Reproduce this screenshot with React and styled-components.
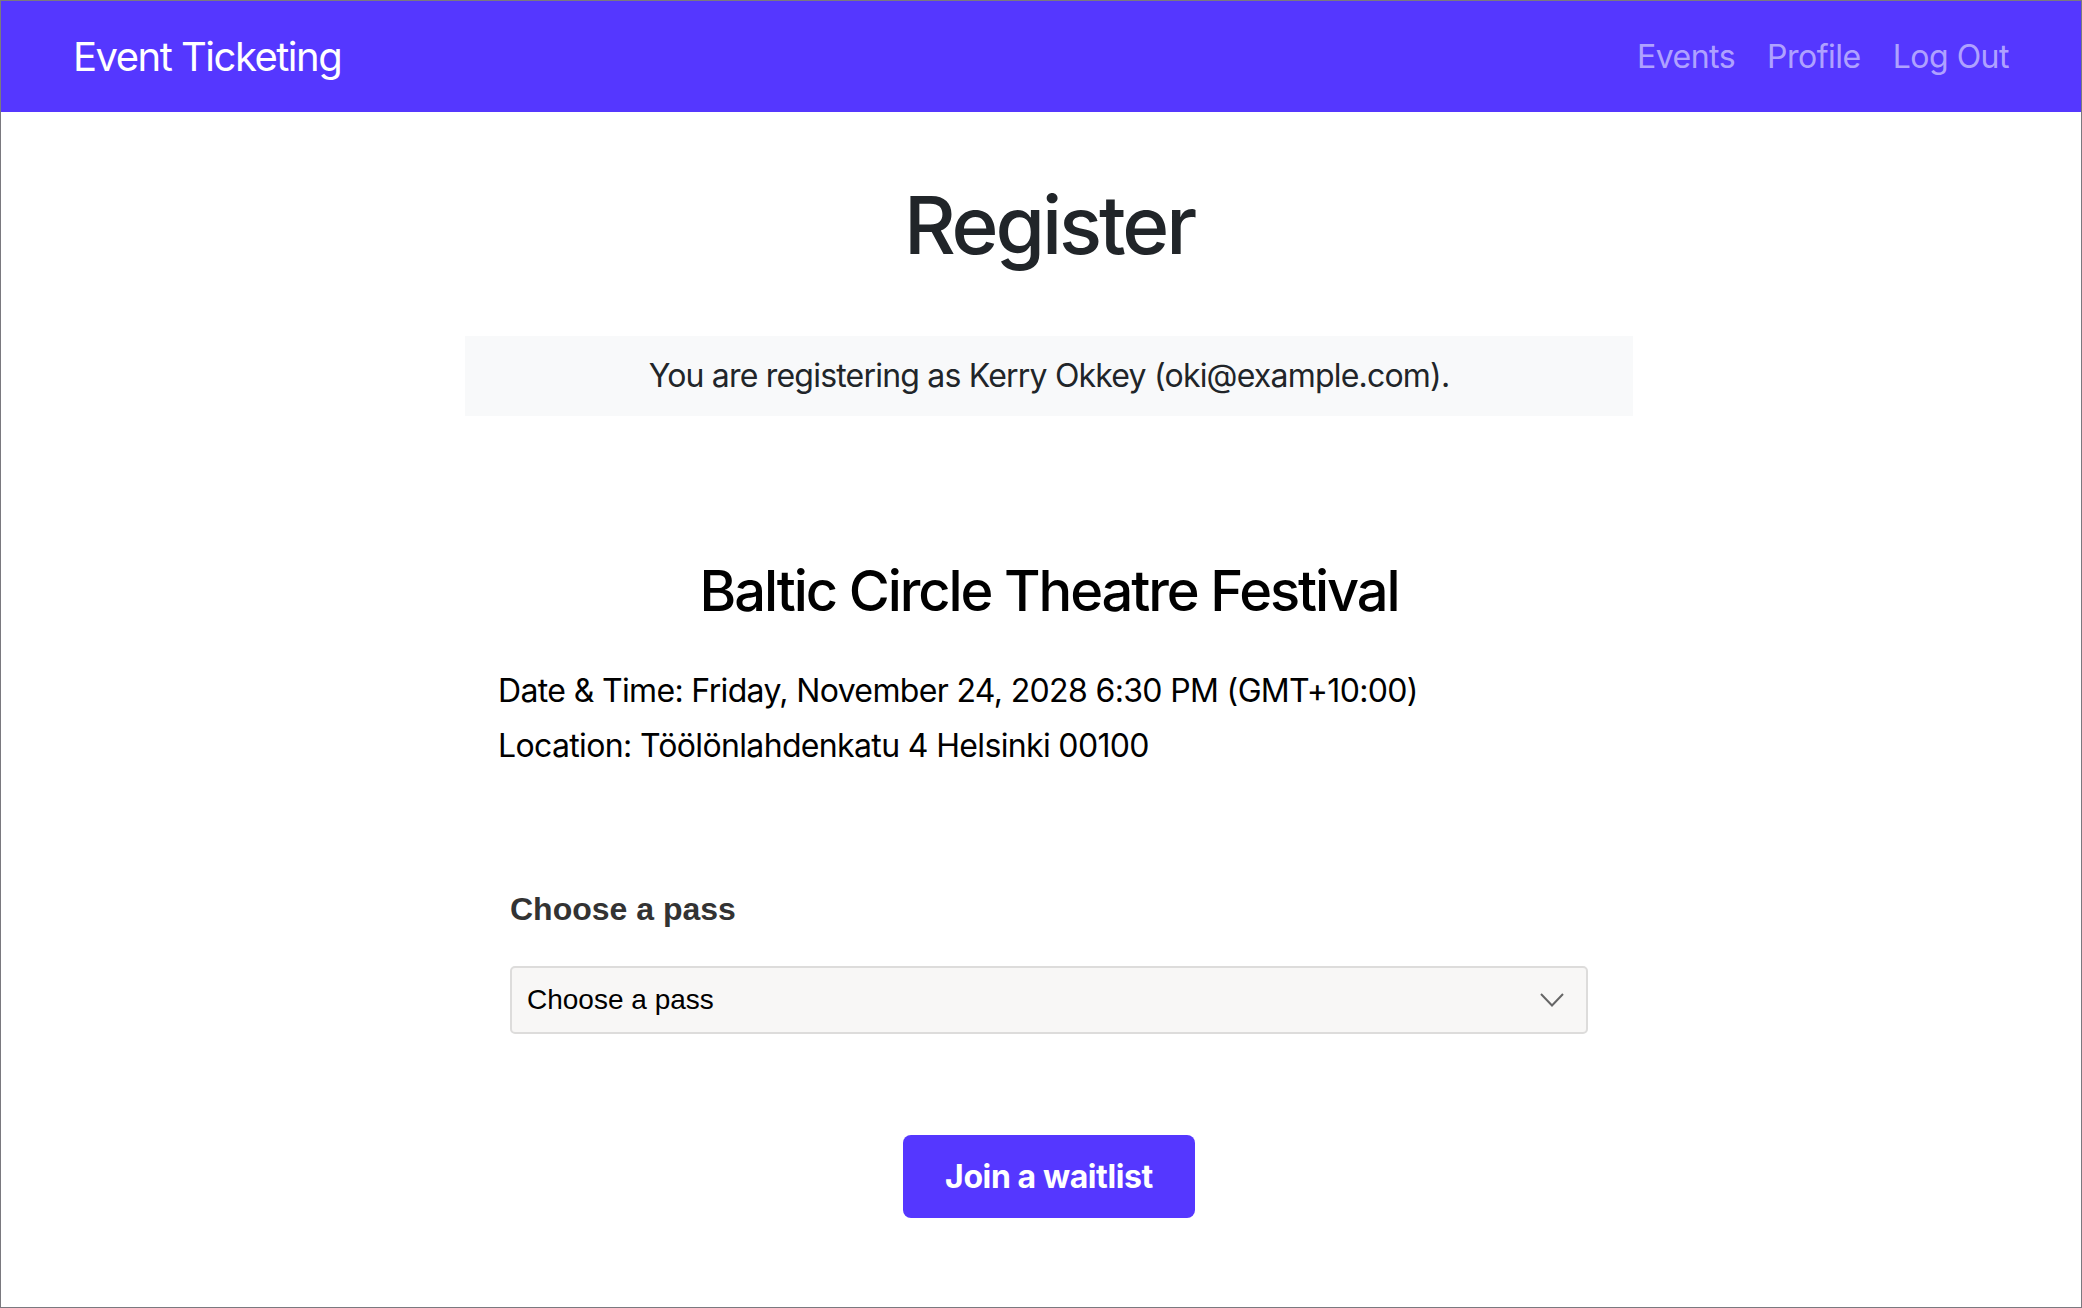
import React from 'react';
import styled, { createGlobalStyle } from 'styled-components';

const BRAND = '#5537ff';

const GlobalStyle = createGlobalStyle`
  * { box-sizing: border-box; }
  body {
    margin: 0;
    font-family: Inter, 'Noto Sans', sans-serif;
    -webkit-font-smoothing: antialiased;
    background: #fff;
  }
`;

const Frame = styled.div`
  min-height: 100vh;
  border: 1px solid #7a797f;
  display: flex;
  flex-direction: column;
`;

const NavBar = styled.header`
  height: 111px;
  background: ${BRAND};
  display: flex;
  align-items: center;
  justify-content: space-between;
  padding: 0 72px 0 72px;
`;

const Brand = styled.a`
  color: #fff;
  font-size: 40px;
  letter-spacing: -1.5px;
  text-decoration: none;
  line-height: 1.5;
`;

const NavLinks = styled.nav`
  display: flex;
  gap: 32px;
`;

const NavLink = styled.a`
  color: rgba(255, 255, 255, 0.55);
  font-size: 32px;
  letter-spacing: -0.5px;
  text-decoration: none;
  line-height: 1.5;
`;

const Main = styled.main`
  display: flex;
  flex-direction: column;
  align-items: center;
  padding-left: 16px;
`;

const Title = styled.h1`
  margin: 65px 0 0;
  font-size: 80px;
  font-weight: 500;
  line-height: 96px;
  letter-spacing: -3.1px;
  color: #212529;
`;

const Notice = styled.p`
  margin: 63px 0 0;
  width: 1168px;
  padding: 16px;
  background: #f8f9fa;
  text-align: center;
  font-size: 32px;
  line-height: 48px;
  letter-spacing: -0.8px;
  color: #212529;
`;

const Event = styled.section`
  width: 1168px;
  padding: 0 33px;
`;

const EventTitle = styled.h3`
  margin: 142px 0 0;
  text-align: center;
  font-size: 56px;
  font-weight: 500;
  line-height: 67px;
  letter-spacing: -2.1px;
  color: #000;
`;

const Details = styled.div`
  margin-top: 38px;
`;

const Detail = styled.p`
  margin: 0;
  font-size: 32px;
  line-height: 55px;
  letter-spacing: -0.65px;
  color: #000;
`;

const Form = styled.form`
  width: 1168px;
  padding: 0 45px;
  display: flex;
  flex-direction: column;
`;

const Label = styled.label`
  margin-top: 112px;
  font-family: 'Liberation Sans', Arial, sans-serif;
  font-weight: 700;
  font-size: 32px;
  line-height: 48px;
  color: #333;
`;

const SelectBox = styled.div`
  margin-top: 33px;
  height: 68px;
  border: 2px solid #dddcdb;
  border-radius: 5px;
  background: #f8f7f6;
  display: flex;
  align-items: center;
  justify-content: space-between;
  padding: 0 22px 0 15px;
  font-family: 'Liberation Sans', Arial, sans-serif;
  font-size: 28px;
  color: #000;
`;

const ButtonRow = styled.div`
  display: flex;
  justify-content: center;
  margin-top: 101px;
`;

const Button = styled.button`
  height: 83px;
  padding: 0 42px;
  border: none;
  border-radius: 8px;
  background: ${BRAND};
  color: #fff;
  font-family: Inter, sans-serif;
  font-weight: 700;
  font-size: 32px;
  letter-spacing: -0.4px;
  cursor: pointer;
`;

const Chevron = () => (
  <svg width="24" height="14" viewBox="0 0 24 14" fill="none">
    <polyline points="1,1 12,12.5 23,1" stroke="#666" strokeWidth="2" />
  </svg>
);

export default function App() {
  return (
    <>
      <GlobalStyle />
      <Frame>
        <NavBar>
          <Brand href="#">Event Ticketing</Brand>
          <NavLinks>
            <NavLink href="#">Events</NavLink>
            <NavLink href="#">Profile</NavLink>
            <NavLink href="#">Log Out</NavLink>
          </NavLinks>
        </NavBar>
        <Main>
          <Title>Register</Title>
          <Notice>You are registering as Kerry Okkey (oki@example.com).</Notice>
          <Event>
            <EventTitle>Baltic Circle Theatre Festival</EventTitle>
            <Details>
              <Detail>Date &amp; Time: Friday, November 24, 2028 6:30 PM (GMT+10:00)</Detail>
              <Detail>Location: Töölönlahdenkatu 4 Helsinki 00100</Detail>
            </Details>
          </Event>
          <Form onSubmit={(e) => e.preventDefault()}>
            <Label>Choose a pass</Label>
            <SelectBox>
              <span>Choose a pass</span>
              <Chevron />
            </SelectBox>
            <ButtonRow>
              <Button type="submit">Join a waitlist</Button>
            </ButtonRow>
          </Form>
        </Main>
      </Frame>
    </>
  );
}
